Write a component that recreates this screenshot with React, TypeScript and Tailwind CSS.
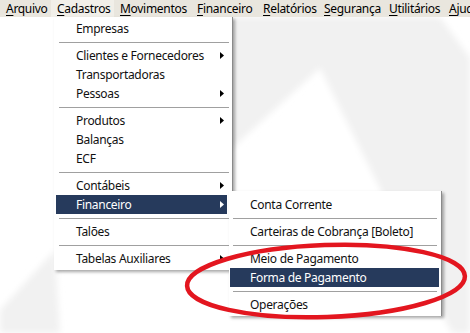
import React from 'react';

// ── Data ───────────────────────────────────────────────────────────────────────

type Entry = { label: string; sub?: boolean; active?: boolean } | 'sep';

const TOP_MENU = [
  { label: 'Arquivo', w: 51 },
  { label: 'Cadastros', w: 63, open: true },
  { label: 'Movimentos', w: 77 },
  { label: 'Financeiro', w: 66 },
  { label: 'Relatórios', w: 61 },
  { label: 'Segurança', w: 65 },
  { label: 'Utilitários', w: 60 },
  { label: 'Ajuda', w: 40 },
];

const CADASTROS: Entry[] = [
  { label: 'Empresas' },
  'sep',
  { label: 'Clientes e Fornecedores', sub: true },
  { label: 'Transportadoras' },
  { label: 'Pessoas', sub: true },
  'sep',
  { label: 'Produtos', sub: true },
  { label: 'Balanças' },
  { label: 'ECF' },
  'sep',
  { label: 'Contábeis', sub: true },
  { label: 'Financeiro', sub: true, active: true },
  'sep',
  { label: 'Talões' },
  'sep',
  { label: 'Tabelas Auxiliares', sub: true },
];

const FINANCEIRO: Entry[] = [
  { label: 'Conta Corrente' },
  'sep',
  { label: 'Carteiras de Cobrança [Boleto]' },
  'sep',
  { label: 'Meio de Pagamento' },
  { label: 'Forma de Pagamento', active: true },
  'sep',
  { label: 'Operações' },
];

// ── Pieces ─────────────────────────────────────────────────────────────────────

function Arrow({ white }: { white?: boolean }) {
  return (
    <svg width="4" height="7" viewBox="0 0 4 7" className="shrink-0">
      <path d="M0 0 L4 3.5 L0 7 Z" fill={white ? '#ffffff' : '#000000'} />
    </svg>
  );
}

function MenuList({ items, itemCls, sepCls }: { items: Entry[]; itemCls: string; sepCls: string }) {
  return (
    <>
      {items.map((it, i) =>
        it === 'sep' ? (
          <div key={i} className={`h-[8px] flex items-center ${sepCls}`}>
            <div className="h-px w-full bg-[#a0a0a0]" />
          </div>
        ) : (
          <div
            key={i}
            className={`h-[19px] flex items-center justify-between pl-[20px] ${itemCls} ${
              it.active ? 'bg-[#263a5c] text-white' : 'text-[#111]'
            }`}
          >
            <span className="whitespace-nowrap">{it.label}</span>
            {it.sub && <Arrow white={it.active} />}
          </div>
        )
      )}
    </>
  );
}

// ── App ────────────────────────────────────────────────────────────────────────

export default function App() {
  return (
    <div
      className="relative w-[470px] h-[333px] overflow-hidden bg-white text-[12px] leading-[17px] tracking-[-0.3px]"
      style={{ fontFamily: '"Noto Sans", "Open Sans", sans-serif' }}
    >
      {/* faint watermark */}
      <svg className="absolute inset-0" width="470" height="333">
        <defs>
          <filter id="soft">
            <feGaussianBlur stdDeviation="3" />
          </filter>
        </defs>
        <g fill="#f1f1f1" filter="url(#soft)">
          <polygon points="230,17 440,17 470,58 470,333 452,333 320,68 230,150" />
          <polygon points="0,310 55,250 60,333 0,333" />
        </g>
      </svg>

      {/* Menu bar */}
      <div className="relative flex h-[17px] bg-[#e9e6de] text-black">
        {TOP_MENU.map((m) => (
          <div
            key={m.label}
            style={{ width: m.w }}
            className={`shrink-0 whitespace-nowrap pl-[6px] ${m.open ? 'bg-[#f1efe9]' : ''}`}
          >
            <span className="underline underline-offset-2 decoration-1">{m.label[0]}</span>
            {m.label.slice(1)}
          </div>
        ))}
      </div>

      {/* Cadastros dropdown */}
      <div className="absolute left-[54px] top-[17px] w-[179px] bg-white border-r border-[#8a8a8a] pt-[2px] pb-[2px] shadow-[2px_2px_3px_rgba(0,0,0,0.35)]">
        <MenuList items={CADASTROS} itemCls="ml-[2px] mr-[5px] pr-[3px]" sepCls="ml-[5px] mr-[3px]" />
      </div>

      {/* Financeiro submenu */}
      <div className="absolute left-[229px] top-[191px] w-[213px] bg-white border-r border-[#8a8a8a] pt-[4px] pb-[2px] shadow-[2px_2px_3px_rgba(0,0,0,0.35)]">
        <MenuList items={FINANCEIRO} itemCls="ml-[1px] mr-[2px]" sepCls="ml-[4px] mr-[4px]" />
      </div>

      {/* red annotation */}
      <svg className="absolute inset-0 pointer-events-none" width="470" height="333">
        <ellipse
          cx="326"
          cy="281"
          rx="139"
          ry="36"
          transform="rotate(-2 326 281)"
          fill="none"
          stroke="#e3161f"
          strokeWidth="4.5"
        />
      </svg>
    </div>
  );
}
